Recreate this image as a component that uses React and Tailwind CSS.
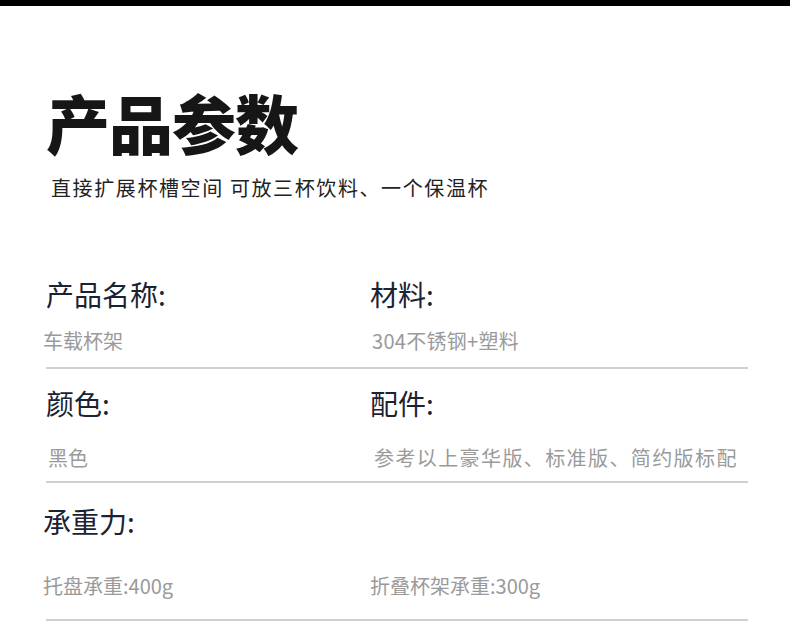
const cjk = { fontFamily: '"Noto Sans CJK SC", "Noto Sans", sans-serif' };

const Label = ({ children, className = '' }) => (
  <div className={`text-[28px] leading-none text-[#1b2232] ${className}`}>{children}</div>
);

const Value = ({ children, className = '' }) => (
  <div className={`text-[20px] leading-none text-[#9a9a9a] ${className}`}>{children}</div>
);

const App = () => {
  return (
    <div className="w-[790px] h-[644px] bg-white overflow-hidden" style={cjk}>
      <div className="h-[6px] bg-black" />

      {/* Header */}
      <div className="ml-[46px] mt-[83px]">
        <h1 className="text-[64px] leading-none font-black text-[#161616] tracking-[-1px]">产品参数</h1>
        <p className="mt-[25px] ml-[5px] text-[20px] leading-none text-[#222] tracking-[1.6px]">
          直接扩展杯槽空间 可放三杯饮料、一个保温杯
        </p>
      </div>

      {/* Params */}
      <div className="ml-[46px] w-[702px] mt-[82px]">
        {/* Row 1 */}
        <div className="grid grid-cols-[324px_1fr]">
          <Label>产品名称:</Label>
          <Label>材料:</Label>
        </div>
        <div className="grid grid-cols-[324px_1fr] mt-[23px]">
          <Value className="-ml-[3px]">车载杯架</Value>
          <Value className="ml-[2px] tracking-[0.3px]">304不锈钢+塑料</Value>
        </div>
        <div className="mt-[16px] h-[2px] bg-[#d0d0d0]" />

        {/* Row 2 */}
        <div className="grid grid-cols-[324px_1fr] mt-[20px]">
          <Label>颜色:</Label>
          <Label>配件:</Label>
        </div>
        <div className="grid grid-cols-[324px_1fr] mt-[31px]">
          <Value className="ml-[2px]">黑色</Value>
          <Value className="ml-[4px] tracking-[1.4px]">参考以上豪华版、标准版、简约版标配</Value>
        </div>
        <div className="mt-[13px] h-[2px] bg-[#d0d0d0]" />

        {/* Row 3 */}
        <div className="grid grid-cols-[324px_1fr] mt-[24px]">
          <Label className="-ml-[3px]">承重力:</Label>
        </div>
        <div className="grid grid-cols-[324px_1fr] mt-[41px]">
          <Value className="-ml-[3px]">托盘承重:400g</Value>
          <Value>折叠杯架承重:300g</Value>
        </div>
        <div className="mt-[23px] h-[2px] bg-[#d0d0d0]" />
      </div>
    </div>
  );
};

export default App;
